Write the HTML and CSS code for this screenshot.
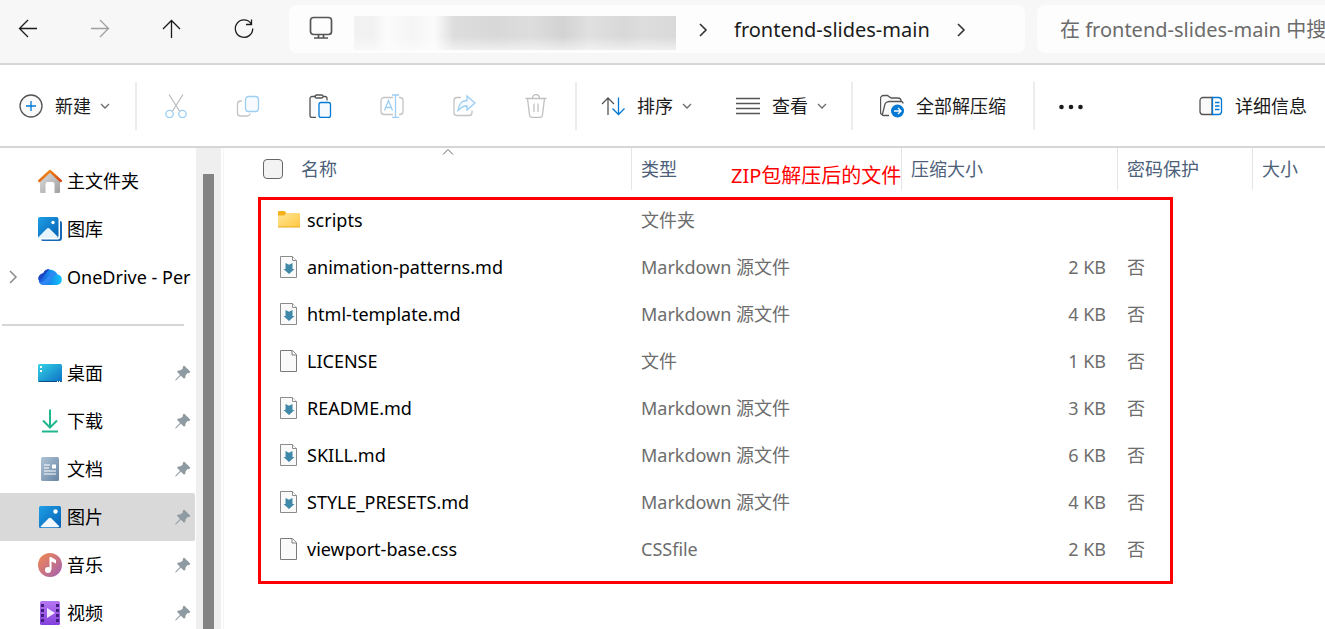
FILE: index.html
```html
<!DOCTYPE html>
<html lang="zh-CN">
<head>
    <meta charset="UTF-8">
    <meta name="viewport" content="width=device-width, initial-scale=1.0">
    <title>frontend-slides-main</title>
    <link rel="stylesheet" href="styles.css">
</head>
<body>

<!-- Shared icons -->
<svg class="icon-defs" aria-hidden="true">
    <defs>
        <linearGradient id="gHomeRoof" x1="0" y1="0" x2="1" y2="1">
            <stop offset="0" stop-color="#f59a1b"/>
            <stop offset="1" stop-color="#d8410f"/>
        </linearGradient>
        <linearGradient id="gHomeWall" x1="0" y1="0" x2="1" y2="1">
            <stop offset="0" stop-color="#dedede"/>
            <stop offset="1" stop-color="#9f9f9f"/>
        </linearGradient>
        <linearGradient id="gBlue" x1="0" y1="0" x2="1" y2="1">
            <stop offset="0" stop-color="#1f9fe6"/>
            <stop offset="1" stop-color="#0560b4"/>
        </linearGradient>
        <linearGradient id="gCloud" x1="0" y1="0" x2="1" y2="0">
            <stop offset="0" stop-color="#1b54d9"/>
            <stop offset="1" stop-color="#12c4fb"/>
        </linearGradient>
        <linearGradient id="gDesktop" x1="0" y1="0" x2="1" y2="1">
            <stop offset="0" stop-color="#35d3e6"/>
            <stop offset="1" stop-color="#0c6fc4"/>
        </linearGradient>
        <linearGradient id="gDoc" x1="0" y1="0" x2="1" y2="1">
            <stop offset="0" stop-color="#b0c4d6"/>
            <stop offset="1" stop-color="#6684a3"/>
        </linearGradient>
        <linearGradient id="gMusic" x1="0" y1="0" x2="1" y2="1">
            <stop offset="0" stop-color="#f58a4b"/>
            <stop offset="1" stop-color="#a15fb5"/>
        </linearGradient>
        <linearGradient id="gVideo" x1="0" y1="0" x2="0" y2="1">
            <stop offset="0" stop-color="#b677f2"/>
            <stop offset="1" stop-color="#8440dc"/>
        </linearGradient>
        <linearGradient id="gFolder" x1="0" y1="0" x2="1" y2="1">
            <stop offset="0" stop-color="#ffe59b"/>
            <stop offset="1" stop-color="#ffc93f"/>
        </linearGradient>
    </defs>
    <symbol id="chevron" viewBox="0 0 10 10">
        <path d="M1 3l4 4 4-4" fill="none" stroke="#6b6b6b"/>
    </symbol>
    <symbol id="pin" viewBox="0 0 16 16">
        <path d="M9.300 .8L15.200 6.500 14.800 7.800 12.300 8.200 10.600 10.500 10.200 13.200 8.800 13.500 5.800 10.700 1.200 15.300 .3 15.500 .5 14.500 5 9.900 2.200 7 2.500 5.800 5.500 5.300 7.600 3.700 8 1.200z" fill="#8f9ba3"/>
    </symbol>
    <symbol id="file" viewBox="0 0 24 24">
        <path d="M3.500 1.500h12l4 4v17h-16z" fill="#fafafa" stroke="#7b7b7b"/>
        <path d="M15 1.500v4.500h4.500" fill="#fff" stroke="#7b7b7b"/>
    </symbol>
    <symbol id="mdfile" viewBox="0 0 24 24">
        <path d="M3.500 1.500h12l4 4v17h-16z" fill="#fafafa" stroke="#8b8b8b"/>
        <path d="M15.500 1.500v4h4" fill="#fff" stroke="#8b8b8b"/>
        <path d="M8.500 8l3.500 1.800 3.500-1.800v6h2l-5.500 5-5.500-5h2z" fill="#3f88a8"/>
    </symbol>
    <symbol id="folder" viewBox="0 0 24 24">
        <path d="M1 4q0-1 1-1h5.500l2 2-2 3H1z" fill="#f5b21c"/>
        <path d="M1 7.500h6.500l2-2.500H22q1 0 1 1v13H1z" fill="url(#gFolder)"/>
        <path d="M1 18.500h22v1H1z" fill="#e8a821"/>
    </symbol>
</svg>

<header class="navbar">
    <div class="nav-buttons">
        <button aria-label="后退"><svg viewBox="0 0 24 24" stroke="#1b1b1b"><path d="M21 12.500H3.500M12 4l-8.500 8.500 8.500 8.500"/></svg></button>
        <button aria-label="前进" disabled><svg viewBox="0 0 24 24" stroke="#a0a0a0"><path d="M3 12.500h17.500M12 4l8.500 8.500-8.500 8.500"/></svg></button>
        <button aria-label="向上"><svg viewBox="0 0 24 24" stroke="#1b1b1b"><path d="M11.500 22V4.500M3 13l8.500-8.500L20 13"/></svg></button>
        <button aria-label="刷新"><svg viewBox="0 0 24 24" stroke="#1b1b1b"><path d="M19 7.500A8.700 8.700 0 1 0 20.700 12.500M19.500 3.500v5h-5.500"/></svg></button>
    </div>
    <div class="address">
        <svg class="pc" viewBox="0 0 24 24" stroke="#555"><rect x="1.500" y="1.500" width="21" height="17" rx="3"/><path d="M9.500 18.500v3M14.500 18.500v3M5 22h14"/></svg>
        <div class="hidden-path"></div>
        <svg class="crumb" viewBox="0 0 10 14" stroke="#333"><path d="M2 1l6 6-6 6"/></svg>
        <a href="#">frontend-slides-main</a>
        <svg class="crumb" viewBox="0 0 10 14" stroke="#333"><path d="M2 1l6 6-6 6"/></svg>
    </div>
    <input class="search" type="text" aria-label="搜索" placeholder="在 frontend-slides-main 中搜索">
</header>

<div class="toolbar">
    <button class="new">
        <svg viewBox="0 0 24 24" stroke="#555"><circle cx="12" cy="12" r="11" fill="#fafafa"/><path d="M12 7v10M7 12h10" stroke="#0078d4"/></svg>
        新建
        <svg class="chev"><use href="#chevron"/></svg>
    </button>
    <span class="separator"></span>
    <div class="actions">
        <button aria-label="剪切" disabled><svg viewBox="0 0 24 24" stroke="#bdbdbd"><path d="M5 0.500l10.500 16.500M19 0.500L8.500 17"/><g stroke="#9ccdf2" fill="#fff"><circle cx="5.500" cy="20" r="3.700"/><circle cx="18.500" cy="20" r="3.700"/></g></svg></button>
        <button aria-label="复制" disabled><svg viewBox="0 0 24 24" stroke="#c4c4c4"><path d="M6 7H4.500a3 3 0 0 0-3 3v9a3 3 0 0 0 3 3h6.500a3 3 0 0 0 3-2.500"/><rect x="9.500" y="2.500" width="13" height="15" rx="3" fill="#f7fbff" stroke="#9ccdf2"/></svg></button>
        <button aria-label="粘贴"><svg viewBox="0 0 24 24" stroke="#555"><path d="M8 2.500H4a2 2 0 0 0-2 2V21.500a2 2 0 0 0 2 2h4M15 2.500h2a2 2 0 0 1 2 2v2" fill="#fafafa"/><rect x="7" y="1" width="8" height="3" rx="1.500"/><rect x="11" y="8.500" width="11.500" height="15" rx="2" fill="#f5faff" stroke="#0078d4"/></svg></button>
        <button aria-label="重命名" disabled><svg viewBox="0 0 24 24" stroke="#c4c4c4"><path d="M13 3.500H4a3 3 0 0 0-3 3v11a3 3 0 0 0 3 3h9M19 3.500h1a3 3 0 0 1 3 3v11a3 3 0 0 1-3 3h-1"/><path d="M4.500 16.500l4-10 4 10M6 13.500h5M12 1h7M12 23.500h7M15.500 1v22.500" stroke="#9ccdf2"/></svg></button>
        <button aria-label="共享" disabled><svg viewBox="0 0 24 24" stroke="#c4c4c4"><path d="M9 3.500H5a3 3 0 0 0-3 3v12a3 3 0 0 0 3 3h12a3 3 0 0 0 3-3v-2"/><path d="M15 2l8 7-8 7v-4c-4 0-6.500 1.500-9 4.500 .5-5.500 3.500-10 9-10z" fill="#f7fbff" stroke="#9ccdf2"/></svg></button>
        <button aria-label="删除" disabled><svg viewBox="0 0 24 24" stroke="#c0c0c0"><path d="M1.500 4.500h21M8.500 4a3.500 3.500 0 0 1 7 0M3.500 4.500l2 16.500a3 3 0 0 0 3 2.500h7a3 3 0 0 0 3-2.500l2-16.500M10 9.500v8.500M14 9.500v8.500"/></svg></button>
    </div>
    <span class="separator"></span>
    <button class="menu">
        <svg viewBox="0 0 24 24" stroke="#555"><path d="M7 21V4M1 10l6-6 6 6"/><path d="M17.500 3.500v17M11.500 14.500l6 6 6-6" stroke="#0078d4"/></svg>
        排序
        <svg class="chev"><use href="#chevron"/></svg>
    </button>
    <button class="menu view">
        <svg viewBox="0 0 24 24" stroke="#555"><path d="M0 4.500h24M0 9.500h24M0 14.500h24M0 19.500h24"/></svg>
        查看
        <svg class="chev"><use href="#chevron"/></svg>
    </button>
    <span class="separator"></span>
    <button class="extract">
        <svg viewBox="0 0 24 24" stroke="#555"><path d="M2.500 20.500a2 2 0 0 1-2-2V4.500a3 3 0 0 1 3-3h4l3.500 2.500H18a3 3 0 0 1 3 3" fill="#fafafa"/><path d="M9 21.500H3.500a1 1 0 0 1-1-1.500l2.500-10a4 4 0 0 1 2-2l2-.5h12a2 2 0 0 1 2 2" fill="#fafafa"/><circle cx="17.500" cy="17" r="6.500" fill="#0078d4" stroke="none"/><path d="M14 17h7M18 14l3 3-3 3" stroke="#fff"/></svg>
        全部解压缩
    </button>
    <span class="separator"></span>
    <button class="more" aria-label="更多"><svg viewBox="0 0 24 24"><g fill="#1b1b1b"><circle cx="2.500" cy="13" r="2.300"/><circle cx="12" cy="13" r="2.300"/><circle cx="21.500" cy="13" r="2.300"/></g></svg></button>
    <button class="details">
        <svg viewBox="0 0 24 24" stroke="#555"><path d="M13 3.500H4a3 3 0 0 0-3 3v11a3 3 0 0 0 3 3h9z" fill="#fafafa"/><path d="M13.500 3.500h6a3 3 0 0 1 3 3v11a3 3 0 0 1-3 3h-6zM16 8.500h4.500M16 12h4.500M16 15.500h4.500" stroke="#0078d4"/></svg>
        详细信息
    </button>
</div>

<div class="content">
    <nav class="sidebar">
        <a href="#">
            <svg viewBox="0 0 24 24"><path d="M2 11L12 2.500 22 11v12q0 1-1 1h-4.500V15q0-2-2-2h-5q-2 0-2 2v9H3q-1 0-1-1z" fill="url(#gHomeWall)"/><path d="M1.200 12L12 2l10.800 10" fill="none" stroke="url(#gHomeRoof)" stroke-width="2.400" stroke-linecap="round" stroke-linejoin="round"/></svg>
            <span>主文件夹</span>
        </a>
        <a href="#">
            <svg viewBox="0 0 24 24"><path d="M22 4q2 0 2 2v15q0 3-3 3H5q-1.500 0-2-1.500h17q2 0 2-2z" fill="#1768b5"/><rect width="20.500" height="21" rx="2" fill="url(#gBlue)"/><path d="M.5 20L8.700 11.700q1.500-1.500 3 0L20 20q-.5 1-1.500 1H2q-1 0-1.500-1z" fill="#e8f4fd"/><circle cx="15" cy="5.500" r="1.700" fill="#fff"/></svg>
            <span>图库</span>
        </a>
        <a href="#">
            <svg class="expand" viewBox="0 0 10 14"><path d="M2 1l6 6-6 6" fill="none" stroke="#8a8a8a" stroke-width="1.500"/></svg>
            <svg viewBox="0 0 24 24"><path d="M6 20a6 6 0 0 1-.8-11.800A8.200 8.200 0 0 1 19.500 9.500 5.300 5.300 0 0 1 18.700 20z" fill="url(#gCloud)"/><path d="M1 17q4 1 7-3l4-5q3-4 7.500 .5Q16 9 13.500 13l-3 5Q9 20 6 20q-4 0-5-3z" fill="#2f86f5"/><path d="M.3 12.500Q1.500 9 5.200 8.200 7 4 11.500 4 8 8 5 12q-2 3-4.500 3z" fill="#1b46c4"/></svg>
            <span>OneDrive - Per</span>
        </a>
        <hr>
        <a href="#">
            <svg viewBox="0 0 24 24"><rect y="3" width="24" height="18" rx="1.500" fill="url(#gDesktop)"/><path d="M.5 20h23.500q-.3 1-1.500 1H1.500q-.8 0-1-1z" fill="#074d86"/><path d="M2 5h2v2H2zM2 9h2v2H2zM19 20h1v1h-1zM21 20h1v1h-1z" fill="#fff"/></svg>
            <span>桌面</span><svg class="pin"><use href="#pin"/></svg>
        </a>
        <a href="#">
            <svg viewBox="0 0 24 24" fill="none" stroke="#1fb58f" stroke-width="2"><path d="M12 0.500v18M5 11.500l7 7 7-7M4 22.500h16"/></svg>
            <span>下载</span><svg class="pin"><use href="#pin"/></svg>
        </a>
        <a href="#">
            <svg viewBox="0 0 24 24"><rect x="3" width="18" height="24" rx="1.500" fill="url(#gDoc)"/><path d="M6 8h6M6 11h5M6 14h12M6 17h12" stroke="#fff" stroke-width="1.200"/><path d="M14 7.500h4v4h-4z" fill="#fff"/></svg>
            <span>文档</span><svg class="pin"><use href="#pin"/></svg>
        </a>
        <a href="#" class="selected">
            <svg viewBox="0 0 24 24"><rect x="1" y="1" width="22" height="22" rx="1.500" fill="url(#gBlue)"/><path d="M2.500 21.500L10.500 13.500q1.500-1.500 3 0L21.500 21.500q-.5 .7-1.500 .7H4q-1 0-1.500-.7z" fill="#f2f8fd"/><circle cx="17.500" cy="6.500" r="2.200" fill="#fff"/></svg>
            <span>图片</span><svg class="pin"><use href="#pin"/></svg>
        </a>
        <a href="#">
            <svg viewBox="0 0 24 24"><circle cx="12" cy="12" r="12" fill="url(#gMusic)"/><circle cx="10" cy="17" r="3" fill="#fff"/><path d="M11.500 17V4l1.500 0 5 3v3.500l-4.500-2V17z" fill="#fff"/></svg>
            <span>音乐</span><svg class="pin"><use href="#pin"/></svg>
        </a>
        <a href="#">
            <svg viewBox="0 0 24 24"><rect x="2" width="20" height="24" rx="1.500" fill="url(#gVideo)"/><path d="M3 3h3v3H3zM3 8h3v3H3zM3 13h3v3H3zM3 18h3v3H3zM18 3h3v3h-3zM18 8h3v3h-3zM18 13h3v3h-3zM18 18h3v3h-3z" fill="#43207c"/><path d="M9 7l8 5-8 5z" fill="#f3ebfd"/></svg>
            <span>视频</span><svg class="pin"><use href="#pin"/></svg>
        </a>
    </nav>
    <div class="scrollbar"><div class="thumb"></div></div>

    <main class="files">
        <table>
            <colgroup>
                <col class="col-name">
                <col class="col-type">
                <col class="col-packed">
                <col class="col-lock">
                <col class="col-size">
            </colgroup>
            <thead>
                <tr>
                    <th><div class="head head-name"><input type="checkbox" aria-label="全选">名称<svg class="sort-up" viewBox="0 0 12 6"><path d="M1 5.500l5-5 5 5" fill="none" stroke="#666"/></svg></div></th>
                    <th><div class="head">类型</div></th>
                    <th><div class="head">压缩大小</div></th>
                    <th><div class="head">密码保护</div></th>
                    <th><div class="head">大小</div></th>
                </tr>
            </thead>
            <tbody>
                <tr><td><a href="#"><svg><use href="#folder"/></svg>scripts</a></td><td>文件夹</td><td></td><td></td><td></td></tr>
                <tr><td><a href="#"><svg><use href="#mdfile"/></svg>animation-patterns.md</a></td><td>Markdown 源文件</td><td>2 KB</td><td>否</td><td></td></tr>
                <tr><td><a href="#"><svg><use href="#mdfile"/></svg>html-template.md</a></td><td>Markdown 源文件</td><td>4 KB</td><td>否</td><td></td></tr>
                <tr><td><a href="#"><svg><use href="#file"/></svg>LICENSE</a></td><td>文件</td><td>1 KB</td><td>否</td><td></td></tr>
                <tr><td><a href="#"><svg><use href="#mdfile"/></svg>README.md</a></td><td>Markdown 源文件</td><td>3 KB</td><td>否</td><td></td></tr>
                <tr><td><a href="#"><svg><use href="#mdfile"/></svg>SKILL.md</a></td><td>Markdown 源文件</td><td>6 KB</td><td>否</td><td></td></tr>
                <tr><td><a href="#"><svg><use href="#mdfile"/></svg>STYLE_PRESETS.md</a></td><td>Markdown 源文件</td><td>4 KB</td><td>否</td><td></td></tr>
                <tr><td><a href="#"><svg><use href="#file"/></svg>viewport-base.css</a></td><td>CSSfile</td><td>2 KB</td><td>否</td><td></td></tr>
            </tbody>
        </table>
        <!-- Red annotation over the list -->
        <div class="mark"></div>
        <div class="mark-text">ZIP包解压后的文件</div>
    </main>
</div>

</body>
</html>
```
FILE: styles.css
```css
* {
    box-sizing: border-box;
}
body {
    margin: 0;
    height: 100vh;
    display: flex;
    flex-direction: column;
    overflow: hidden;
    font-family: "Noto Sans", "Noto Sans CJK SC", sans-serif;
    font-size: 18px;
    line-height: 24px;
    color: #000;
    background-color: #fff;
}
button {
    display: flex;
    align-items: center;
    padding: 0;
    border: none;
    background: none;
    font: inherit;
    color: #1b1b1b;
    white-space: nowrap;
    cursor: pointer;
}
a {
    color: inherit;
    text-decoration: none;
}
svg {
    flex: none;
    width: 24px;
    height: 24px;
}
.icon-defs {
    position: absolute;
    width: 0;
    height: 0;
}

/* Navigation bar */
.navbar {
    flex: none;
    display: flex;
    height: 65px;
    padding-top: 5px;
    padding-bottom: 10px;
    background-color: #f7f7f7;
    border-bottom: 2px solid #d6d6d6;
}
.navbar svg, .toolbar svg {
    fill: none;
    stroke-width: 1.3;
}
.nav-buttons {
    flex: none;
    display: flex;
    align-items: center;
    gap: 48px;
    padding: 0 33px 2px 16px;
}
.address {
    flex: 1;
    display: flex;
    align-items: center;
    padding: 2px 0 0 20px;
    background-color: #fdfdfd;
    border-radius: 8px;
    font-size: 20px;
    color: #1b1b1b;
}
.address .pc {
    margin-bottom: 4px;
    stroke-width: 1.7;
}
.address a {
    margin: 0 26px;
}
.hidden-path {
    width: 322px;
    height: 34px;
    margin: 6px 22px 0 21px;
    background:
        linear-gradient(180deg, rgba(253, 253, 253, 0) 60%, rgba(253, 253, 253, 0.6)),
        linear-gradient(90deg, #f2f2f2, #f1f1f1 6%, #fbfbfb 10%, #f5f5f5 18%, #fbfbfb 25%, #dddddd 31%, #d8d8d8 44%, #dddddd 55%, #d3d3d3 65%, #e0e0e0 73%, #d8d8d8 84%, #dddddd 90%, #d9d9d9);
}
.address .crumb {
    width: 10px;
    height: 14px;
    stroke-width: 1.6;
}
.search {
    flex: none;
    width: 288px;
    margin-left: 12px;
    padding: 2px 0 0 23px;
    border: none;
    border-radius: 8px 0 0 8px;
    background-color: #fdfdfd;
    font: inherit;
    font-size: 20px;
    outline: none;
}
.search::placeholder {
    color: #6b6b6b;
}

/* Toolbar */
.toolbar {
    flex: none;
    display: flex;
    align-items: center;
    height: 83px;
    border-bottom: 2px solid #d6d6d6;
}
.toolbar > button {
    gap: 12px;
    height: 48px;
}
.toolbar .chev {
    width: 10px;
    height: 10px;
    margin-left: -3px;
}
.toolbar .new {
    padding: 0 25px 0 19px;
}
.toolbar .menu {
    padding: 0 20px 0 24px;
}
.toolbar .view {
    padding-right: 24px;
}
.toolbar .extract {
    padding: 0 27px;
}
.toolbar .more {
    padding: 0 24px;
}
.toolbar .details {
    margin-left: auto;
    padding-right: 18px;
}
.separator {
    width: 2px;
    height: 48px;
    background-color: #ececec;
}
.actions {
    display: flex;
    gap: 48px;
    padding: 0 27px;
}

/* Sidebar */
.content {
    flex: 1;
    display: flex;
    min-height: 0;
}
.sidebar {
    flex: none;
    width: 196px;
    padding: 9px 1px 0 0;
    overflow: hidden;
}
.sidebar a {
    display: flex;
    align-items: center;
    justify-content: flex-end;
    gap: 5px;
    height: 48px;
    padding-left: 8px;
}
.sidebar a span {
    flex: none;
    width: 128px;
    overflow: hidden;
    white-space: nowrap;
}
.sidebar .expand {
    width: 10px;
    height: 14px;
    margin-right: auto;
}
.sidebar .selected {
    background-color: #d9d9d9;
    border-radius: 0 2px 2px 0;
}
.sidebar .pin {
    width: 16px;
    height: 16px;
    margin: 0 4px 0 -25px;
}
.sidebar hr {
    height: 2px;
    margin: 23px 11px 23px 2px;
    border: none;
    background-color: #d6d6d6;
}
.scrollbar {
    flex: none;
    width: 25px;
    padding: 26px 7px 0;
    background-color: #efefef;
}
.thumb {
    height: 100%;
    background-color: #848484;
}

/* File list */
.files {
    flex: 1;
    position: relative;
    margin-left: 2px;
    border-left: 1px solid #f5f5f5;
    overflow: hidden;
}
table {
    width: 100%;
    table-layout: fixed;
    border-collapse: collapse;
}
.col-name {
    width: 408px;
}
.col-type {
    width: 270px;
}
.col-packed {
    width: 216px;
}
.col-lock {
    width: 135px;
}
th {
    height: 48px;
    padding: 0;
    vertical-align: top;
    text-align: left;
    font-weight: normal;
    color: #4c607a;
}
.head {
    position: relative;
    display: flex;
    align-items: center;
    height: 42px;
    padding-left: 9px;
    border-right: 1px solid #e5e5e5;
}
th:last-child .head {
    border-right: none;
}
.head-name {
    gap: 18px;
    padding-left: 39px;
}
.head input {
    appearance: none;
    width: 20px;
    height: 20px;
    margin: 0;
    border: 1px solid #666;
    border-radius: 4px;
    background-color: #f3f3f3;
}
.sort-up {
    position: absolute;
    top: 1px;
    left: 218px;
    width: 12px;
    height: 6px;
}
td {
    height: 47px;
    padding: 0 0 0 9px;
    color: #6d6d6d;
    white-space: nowrap;
}
td:first-child {
    padding-left: 53px;
    color: #000;
}
td:nth-child(3) {
    padding-right: 12px;
    text-align: right;
}
td a {
    display: flex;
    align-items: center;
    gap: 6px;
}
.mark {
    position: absolute;
    top: 49px;
    left: 34px;
    width: 915px;
    height: 387px;
    border: 3px solid #f00;
}
.mark-text {
    position: absolute;
    top: 16px;
    left: 507px;
    font-size: 20px;
    color: #f00;
}
```
